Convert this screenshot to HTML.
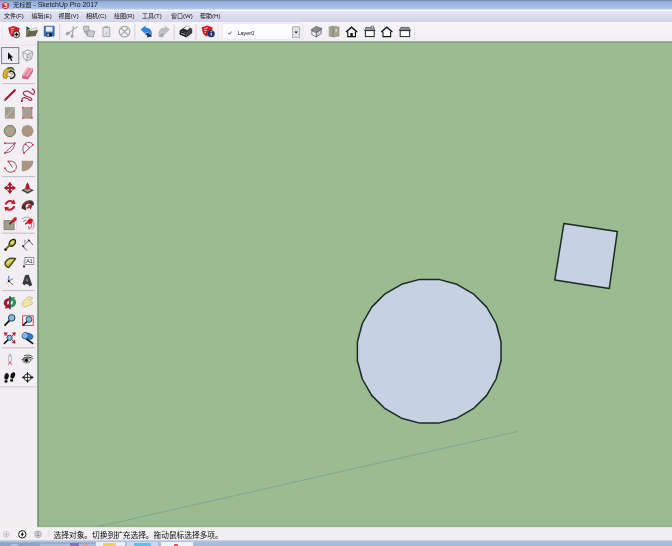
<!DOCTYPE html>
<html lang="zh-CN">
<head>
<meta charset="utf-8">
<title>无标题 - SketchUp Pro 2017</title>
<style>
html,body{margin:0;padding:0;}
body{width:672px;height:546px;overflow:hidden;position:relative;background:#9bbb91;font-family:"Liberation Sans","Noto Sans CJK SC",sans-serif;color:#111;}
.abs{position:absolute;}
svg{position:absolute;left:0;top:0;overflow:visible;}
#title .t,#menu span,#status .t,svg text{filter:grayscale(1);}
#title{left:0;top:0;width:672px;height:11px;background:linear-gradient(#6d7f97 0,#879fc4 1px,#95b1dc 2px,#a3bfe8 7px,#b2caed 9px,#eef3fb 9.9px,#fbfcfe 10.5px,#eeeff8 11px);}
#title .t{left:13px;top:0;height:10px;line-height:10.5px;font-size:6.2px;color:#10161f;white-space:nowrap;}
#title .t b{font-weight:normal;font-size:6.95px;}
#menu{left:0;top:11px;width:672px;height:11px;background:linear-gradient(#e3e4f2,#dadced 50%,#d4d6e8 90%,#cfd1e3);}
#menu span{position:absolute;top:0.4px;height:11px;line-height:10.5px;font-size:6.05px;white-space:nowrap;color:#0c0c14;}
#tool{left:0;top:22px;width:672px;height:19.2px;background:linear-gradient(#f6f4f8,#f2eff3);}
#left{left:0;top:41px;width:37.4px;height:486px;background:#f2eff3;}
#edgeL{left:37.4px;top:41.2px;width:1.8px;height:485.6px;background:linear-gradient(to right,#b9c4b9 0,#6a856c 45%,#7a977a 75%,#9bbb91 100%);}
#edgeT{left:37.3px;top:41px;width:635px;height:1.7px;background:linear-gradient(to bottom,#c4cdc3 0,#728d74 50%,#8dab87 85%,#9bbb91 100%);}
#canvas{left:38px;top:42px;width:634px;height:485px;background:linear-gradient(#9bbb91 0,#9bbb91 482.6px,#93b08c 484px,#93b08c 484.8px,#def0d6 485px);}
#status{left:0;top:527px;width:672px;height:13.5px;background:linear-gradient(#f3f3ee 0,#f2f0f2 2px,#f1eef2 100%);}
#status:before{content:"";position:absolute;left:38px;right:0;top:-0.2px;height:1px;background:#e0f0d9;}
#status .t{left:53.6px;top:0.5px;height:14px;line-height:15px;letter-spacing:0;font-size:7.7px;white-space:nowrap;color:#0a0a0a;}
#task{left:0;top:540.3px;width:672px;height:5.7px;background:linear-gradient(#dfe3ec 0,#b9c8e0 0.8px,#a9bedd 2px,#a3badc 6.2px);overflow:hidden;}
#task i{position:absolute;top:0;height:6px;display:block;}
</style>
</head>
<body>
<div id="title" class="abs">
<svg width="12" height="11" viewBox="0 0 12 11"><path d="M2.4 3.6 L5.5 2.6 L8.7 3.6 L8.5 7.6 L5.5 8.9 L2.6 7.6 Z" fill="#d8262c" stroke="#d8262c" stroke-width="0.6" stroke-linejoin="round"/><path d="M3.6 4 L6.8 3.4 L6.8 4.6 L4.8 5 L7 5.6 L6.8 7.4 L3.8 7.6" fill="none" stroke="#fff" stroke-width="0.8"/></svg>
<div class="t abs">无标题<b> - SketchUp Pro 2017</b></div></div>
<div id="menu" class="abs">
<span style="left:4px">文件(F)</span><span style="left:31.5px">编辑(E)</span><span style="left:58.5px">视图(V)</span><span style="left:86px">相机(C)</span><span style="left:114px">绘图(R)</span><span style="left:142px">工具(T)</span><span style="left:171px">窗口(W)</span><span style="left:200px">帮助(H)</span>
</div>
<div id="tool" class="abs">
<svg width="672" height="20" viewBox="0 22 672 20">
<!-- grips -->
<g stroke="#d2cfd7" stroke-width="0.8" stroke-dasharray="0.8 0.8">
<line x1="2.4" y1="24.5" x2="2.4" y2="40"/><line x1="218" y1="24.5" x2="218" y2="40"/><line x1="303" y1="24.5" x2="303" y2="40"/><line x1="414.5" y1="24.5" x2="414.5" y2="40"/>
</g>
<g stroke="#cfccd3" stroke-width="0.9">
<line x1="59.7" y1="24" x2="59.7" y2="40"/><line x1="134.8" y1="24" x2="134.8" y2="40"/><line x1="174.2" y1="24" x2="174.2" y2="40"/><line x1="196" y1="24" x2="196" y2="40"/>
</g>
<!-- new -->
<g transform="translate(0 0.5)">
<path d="M8.2 27.2 L13.4 25.4 L19.6 27.4 L18.6 32 L12 36.4 L9.6 33 Z" fill="#c8202a"/>
<path d="M10.6 28.6 L14.4 27.8 M10.8 30.6 L13.6 30.2 M11 32.6 L12.6 32.4" stroke="#f6c8cc" stroke-width="0.9" fill="none"/>
<circle cx="16.5" cy="34" r="3.2" fill="#fff" stroke="#111" stroke-width="0.8"/>
<path d="M14.4 34 H18.6 M16.5 31.9 V36.1" stroke="#111" stroke-width="1.3"/>
</g>
<!-- open -->
<path d="M26 37 L26 29.6 L29.5 29.6 L31 30.8 L36 30.2 L36 33 Z" fill="#85826a"/>
<path d="M31 29.4 L36.4 27.8 L36.8 32 L31 33 Z" fill="#efece0" stroke="#8b8872" stroke-width="0.4"/>
<path d="M26 37 L28.6 31.6 L38.2 30 L35.6 36 Z" fill="#65634b"/>
<path d="M26.2 26 L30.2 28.4 L26.6 30.6 Z" fill="#176a34"/>
<!-- save -->
<rect x="43.8" y="25.8" width="10.8" height="10.8" rx="1.2" fill="#3b6ea9"/>
<rect x="45.8" y="26.8" width="6.8" height="4.8" fill="#e9eef8"/>
<rect x="46.4" y="33" width="5.6" height="3.6" fill="#1d2b4a"/>
<rect x="47.2" y="33.6" width="1.8" height="2.4" fill="#9ab4dc"/>
<!-- cut -->
<g stroke="#a3a2a8" fill="none" stroke-width="1.1" stroke-linecap="round">
<path d="M77.2 26.6 L69.4 32.6 M73.4 26.2 L72.4 35"/>
</g>
<ellipse cx="67.8" cy="33.4" rx="2.3" ry="1.5" fill="#a3a2a8" transform="rotate(-30 67.8 33.4)"/>
<ellipse cx="72.2" cy="36" rx="1.5" ry="2" fill="#a3a2a8"/>
<!-- copy -->
<g fill="#c9c8ce" stroke="#9a999f" stroke-width="0.9">
<path d="M83.4 26.6 L88.6 26 L89.4 31 L84.2 31.6 Z"/>
<path d="M88 30.4 L94.8 31.4 L93.4 37 L87 36 Z"/>
<path d="M84.6 32 L87 31.6 L87 35 Z"/>
</g>
<!-- paste -->
<rect x="103" y="27.4" width="6.8" height="9" fill="#e4e3e8" stroke="#a09fa6" stroke-width="0.9"/>
<rect x="104.6" y="26.2" width="3.6" height="1.8" fill="#a09fa6"/>
<path d="M104.6 33.6 H107 V31.4" stroke="#b4b3b9" stroke-width="0.7" fill="none"/>
<!-- delete -->
<circle cx="124.6" cy="31.6" r="5.3" fill="none" stroke="#a3a2a8" stroke-width="1.2"/>
<path d="M121 28 L128.2 35.2 M128.2 28 L121 35.2" stroke="#a3a2a8" stroke-width="1.1"/>
<!-- undo -->
<path d="M146.4 32.6 C149 32.6 151 33.6 152 36.6 L147 37.4 C147.4 35.6 146.6 34.8 145.4 34.6 Z" fill="#26415f"/>
<path d="M140.6 29.6 L145.6 25.6 L145.6 27.8 C149.6 27.6 152.2 30 152 35.6 C151 32.8 148.8 32.2 145.6 32.4 L145.6 34.6 Z" fill="#2d86dc"/>
<!-- redo -->
<path d="M169.8 29.6 L164.8 25.6 L164.8 27.8 C160.8 27.6 158.2 30 158.4 35.6 C159.4 32.8 161.6 32.2 164.8 32.4 L164.8 34.6 Z" fill="#bcbbc1"/>
<path d="M164 32.6 C161.4 32.6 159.4 33.6 158.4 36.6 L163.4 37.4 C163 35.6 163.8 34.8 165 34.6 Z" fill="#a9a8ae"/>
<!-- print -->
<path d="M179.6 30.4 L185.6 26.4 L192.2 28.8 L186.6 33.2 Z" fill="#26262a"/>
<path d="M183.4 28.6 L186.6 26 L190.6 27.6 L187.4 30.2 Z" fill="#f4f4f6" stroke="#444" stroke-width="0.3"/>
<path d="M179.6 30.4 L186.6 33.2 L186.6 37.4 L179.6 34.6 Z" fill="#141416"/>
<path d="M186.6 33.2 L192.2 28.8 L192.2 33 L186.6 37.4 Z" fill="#3a3a40"/>
<path d="M181 33 L185.4 34.8" stroke="#d8d8dc" stroke-width="0.8"/>
<!-- model info -->
<path d="M201.6 27.2 L207.4 25.4 L212.6 27.4 L211.6 34 L206 36.6 L203 33.4 Z" fill="#c8202a"/>
<path d="M204 28.6 L208 27.8 M204.2 30.6 L207 30.2 M204.4 32.6 L206 32.4" stroke="#f6c8cc" stroke-width="0.9" fill="none"/>
<circle cx="211.2" cy="33.8" r="3.5" fill="#18336f"/>
<path d="M211.2 33 V35.6" stroke="#fff" stroke-width="1"/><circle cx="211.2" cy="31.7" r="0.6" fill="#fff"/>
<!-- layer dropdown -->
<rect x="222.6" y="23.8" width="78.2" height="15.4" fill="#fdfcfe" stroke="#e1dee6" stroke-width="0.6"/>
<path d="M228.4 33 L229.4 34.2 L231.4 31.6" fill="none" stroke="#333" stroke-width="0.8"/>
<text x="237.4" y="35.2" font-family="Liberation Sans, sans-serif" font-size="5.5" fill="#111">Layer0</text>
<rect x="292.4" y="26.8" width="7.4" height="11" fill="#e3e1e6" stroke="#8b8a92" stroke-width="0.6"/>
<path d="M294.4 31.4 H297.8 L296.1 33.6 Z" fill="#111"/>
<!-- views -->
<!-- iso -->
<path d="M310.8 30 L316 26.4 L322.2 28.6 L318 32 Z" fill="#8c8c90" stroke="#3c3c40" stroke-width="0.5"/>
<path d="M311.8 31 L311.8 34.6 L316.4 37 L316.4 32.6 Z" fill="#f2f2f4" stroke="#3c3c40" stroke-width="0.6"/>
<path d="M316.4 32.6 L321.2 29.6 L321.2 33.6 L316.4 37 Z" fill="#d0d0d4" stroke="#3c3c40" stroke-width="0.6"/>
<!-- top -->
<path d="M329.2 27 L333 26.2 L339 27 L339 36 L333 37 L329.2 36 Z" fill="#a4a594" stroke="#77786a" stroke-width="0.5"/>
<path d="M333 26.2 V37" stroke="#6c6d60" stroke-width="0.6"/>
<rect x="335.4" y="29" width="2" height="2.4" fill="#d4d5c8"/>
<!-- front -->
<path d="M346 32 L351.6 27.2 L357.2 32" fill="none" stroke="#111" stroke-width="1.5" stroke-linejoin="miter"/>
<path d="M347.8 31.4 V36.6 H355.4 V31.4" fill="#fff" stroke="#111" stroke-width="1.2"/>
<rect x="350.4" y="33" width="2.4" height="3.6" fill="#111"/>
<!-- right -->
<path d="M364.4 30.6 L366 27.4 H373.6 L375.2 30.6 Z" fill="#9a9a9e" stroke="#333" stroke-width="0.6"/>
<rect x="365.4" y="30.6" width="8.8" height="6" fill="#fff" stroke="#222" stroke-width="1"/>
<circle cx="372.4" cy="27" r="1.3" fill="#d8d8dc" stroke="#444" stroke-width="0.5"/>
<!-- back -->
<path d="M381.2 32 L386.8 27.2 L392.4 32" fill="none" stroke="#111" stroke-width="1.3"/>
<path d="M383 31.4 V36.6 H390.6 V31.4" fill="#fff" stroke="#111" stroke-width="1.1"/>
<path d="M385.6 27.4 L384.6 26.4" stroke="#555" stroke-width="0.8"/>
<!-- left -->
<path d="M399.2 30.6 L400.8 27.4 H409 L410.6 30.6 Z" fill="#8c8c90" stroke="#333" stroke-width="0.6"/>
<rect x="400.2" y="30.6" width="9.4" height="6" fill="#fff" stroke="#222" stroke-width="1"/>
</svg>

</div>
<div id="canvas" class="abs">
<svg width="634" height="485" viewBox="38 42 634 485">
<line x1="98.4" y1="526.6" x2="518" y2="431.4" stroke="#5b7b8e" stroke-opacity="0.8" stroke-width="0.8" stroke-dasharray="0.9 0.7"/>
<polygon points="501.0,360.7 496.1,379.0 486.7,395.4 473.3,408.7 456.9,418.2 438.7,423.1 419.7,423.1 401.5,418.2 385.1,408.7 371.7,395.4 362.3,379.0 357.4,360.7 357.4,341.8 362.3,323.5 371.7,307.1 385.1,293.8 401.5,284.3 419.7,279.4 438.7,279.4 456.9,284.3 473.3,293.8 486.7,307.1 496.1,323.5 501.0,341.8" fill="#c6d2e2" stroke="#1a2a24" stroke-width="1.5" stroke-linejoin="round"/>
<polygon points="563.9,223.5 617.3,231.6 609.3,288.5 554.8,280" fill="#c6d2e2" stroke="#1a2a24" stroke-width="1.5" stroke-linejoin="round"/>
</svg>
</div>
<div id="edgeT" class="abs"></div><div id="edgeL" class="abs"></div>
<div id="left" class="abs">
<svg width="38" height="486" viewBox="0 41 38 486">
<line x1="0" y1="44.8" x2="37" y2="44.8" stroke="#e2dfe6" stroke-width="0.7"/>
<g stroke="#b3b0b8" stroke-width="0.8">
<line x1="2" y1="83.6" x2="35" y2="83.6"/><line x1="2" y1="176.6" x2="35" y2="176.6"/><line x1="2" y1="233.2" x2="35" y2="233.2"/><line x1="2" y1="290.6" x2="35" y2="290.6"/><line x1="2" y1="347.8" x2="35" y2="347.8"/>
</g>
<line x1="0" y1="386.8" x2="37" y2="386.8" stroke="#c4c1c9" stroke-width="0.8"/>
<!-- select -->
<rect x="1.6" y="47.6" width="17.2" height="16" fill="#eceaf0" stroke="#74737b" stroke-width="0.9"/>
<path d="M8 52.2 L8 59.6 L9.8 58 L11.2 61 L12.4 60.4 L11 57.6 L13.2 57.4 Z" fill="#0c0c10"/>
<!-- component -->
<g fill="none" stroke="#adacb3" stroke-width="1.1">
<path d="M22.6 52.4 L27.4 49.8 L32.8 52 L31.6 58.6 L26.6 61 L23.4 57.6 Z"/>
<path d="M22.6 52.4 L27.8 54.4 L32.8 52 M27.8 54.4 L26.6 61"/>
<circle cx="28.6" cy="56" r="1.8"/>
</g>
<!-- paint bucket -->
<path d="M3 75.6 C3 71 6 68 9 67.4 L11.6 69.6 L6.4 78.6 L3.6 78 Z" fill="#d9b21c" stroke="#5a4a10" stroke-width="0.5"/>
<path d="M7.4 69 C9.6 66.6 13.4 67.6 14.2 70.4" fill="none" stroke="#2c5c3c" stroke-width="1.3"/>
<path d="M9.4 71.6 C12 70 14.6 72 14.8 75 C14.6 77.6 12 79 10 78.2" fill="none" stroke="#1c2420" stroke-width="1.5"/>
<path d="M8.2 72 L12.8 73.8 L10.4 77.4 L6.8 75.6 Z" fill="#e8e4d4" stroke="#444" stroke-width="0.4"/>
<!-- eraser -->
<path d="M22 75.4 L27.6 67.6 L33 68.6 L33 71.8 L28 79.4 L22 78.4 Z" fill="#d4688a"/>
<path d="M22 75.4 L27.6 67.6 L33 68.6 L27.8 76.6 Z" fill="#f3aabc"/>
<path d="M24 75.8 L29.6 68 L31.2 68.3 L25.8 76.2 Z" fill="#e47f9c"/>
<!-- pencil -->
<path d="M5.2 99.8 L14.8 90.2" stroke="#9c1c36" stroke-width="2.2" stroke-linecap="round"/>
<path d="M4.2 100.8 L5.8 99.2" stroke="#77706a" stroke-width="1.6"/>
<!-- freehand -->
<path d="M32.3 88.8 C32.6 89.2 34.1 90.0 34.3 90.9 C34.5 91.9 34.0 94.1 33.5 94.5 C33.0 94.9 31.9 93.8 31.0 93.3 C30.1 92.8 29.3 91.6 28.2 91.3 C27.1 91.0 25.0 91.3 24.2 91.7 C23.4 92.1 23.1 93.0 23.4 93.7 C23.7 94.4 24.8 95.5 25.8 96.1 C26.8 96.7 28.4 96.8 29.4 97.3 C30.4 97.8 31.8 98.8 31.9 99.3 C32.0 99.8 30.9 100.6 30.2 100.5 C29.4 100.4 28.4 99.0 27.4 98.5 C26.4 98.0 25.1 97.6 24.2 97.7 C23.3 97.8 22.6 98.3 22.2 98.9 C21.8 99.5 21.9 100.9 21.8 101.3" fill="none" stroke="#9e2f58" stroke-width="1.2" stroke-linecap="round"/>
<circle cx="21.9" cy="101" r="0.9" fill="#7c2040"/>
<!-- rectangle -->
<rect x="5.2" y="107.6" width="9.2" height="10.6" fill="#a59f8e" stroke="#8c8676" stroke-width="0.5"/>
<path d="M5.6 117.8 L14 108" stroke="#cfc8b8" stroke-width="0.9"/>
<!-- rotated rect -->
<rect x="22.8" y="107.6" width="9.2" height="10.6" fill="#a89f90" stroke="#a06a70" stroke-width="0.5"/>
<g fill="#c02040"><circle cx="22.8" cy="107.8" r="0.8"/><circle cx="32" cy="107.8" r="0.8"/><circle cx="22.8" cy="118" r="0.8"/><circle cx="32" cy="118" r="0.8"/></g>
<path d="M23.2 109.4 L30.6 117.8" stroke="#b88c88" stroke-width="0.7"/>
<!-- circle -->
<circle cx="9.9" cy="131" r="5.7" fill="#a89e8a" stroke="#6f7062" stroke-width="0.9"/>
<circle cx="9.9" cy="131" r="2.6" fill="none" stroke="#b8aa90" stroke-width="0.8"/>
<!-- polygon -->
<path d="M27.5 125.2 L31.6 126.8 L33.2 131 L31.6 135.2 L27.5 136.8 L23.4 135.2 L21.8 131 L23.4 126.8 Z" fill="#ac967f" stroke="#97806e" stroke-width="0.6"/>
<!-- arc -->
<g fill="none" stroke="#8c2c4c" stroke-width="0.8">
<path d="M4.9 143.2 H14.8 M4.9 153 L14.8 143.2"/><path d="M14.8 143.2 C14.4 149 10.6 152.6 4.9 153"/>
</g>
<g fill="#d02848"><circle cx="4.9" cy="143.2" r="0.9"/><circle cx="14.8" cy="143.2" r="0.9"/><circle cx="4.9" cy="153" r="0.9"/></g>
<!-- 2pt arc -->
<g fill="none" stroke="#7c2c48" stroke-width="0.8">
<path d="M24 153 L33 144.8 M24 153 C21.4 148.6 23.6 143.2 27.6 142.4 C30 142 32.2 143 33 144.8 M25.4 144.2 L29.8 147.8"/>
</g>
<g fill="#d02848"><circle cx="24" cy="153" r="0.9"/><circle cx="33" cy="144.8" r="0.9"/><circle cx="25.4" cy="144.2" r="0.8"/></g>
<!-- 3pt arc -->
<path d="M8.4 161.4 C12.6 160 16.4 163 16.4 166.8 C16.4 171 11.6 173.6 7.6 171.4 C6.4 170.6 5.4 169.6 5 168.2 M8.4 161.4 L12.6 167.6" fill="none" stroke="#7c2c48" stroke-width="0.8"/>
<g fill="#d02848"><circle cx="8.4" cy="161.4" r="0.9"/><circle cx="5" cy="168.2" r="0.9"/><circle cx="14.4" cy="171" r="0.8"/></g>
<!-- pie -->
<path d="M22.2 161.2 L33 161.2 C32.6 166.6 28.4 170.6 22.2 171 Z" fill="#aa9580" stroke="#7a6a60" stroke-width="0.5"/>
<!-- move -->
<g fill="#a51428" transform="translate(0 0.4)">
<path d="M9.9 181.4 L12.6 185 H7.2 Z"/><path d="M9.9 193.6 L12.6 190 H7.2 Z"/><path d="M3.8 187.5 L7.4 184.8 V190.2 Z"/><path d="M16 187.5 L12.4 184.8 V190.2 Z"/>
<rect x="9" y="184" width="1.8" height="7"/><rect x="6.4" y="186.6" width="7" height="1.8"/>
</g>
<!-- push/pull -->
<path d="M21.2 190.3 L27.6 187.2 L34 190.3 L27.6 193.7 Z" fill="#3c4a3e"/>
<path d="M23.6 189.9 L27.6 188 L31.6 189.9 L27.6 192 Z" fill="#9aa08a"/>
<path d="M27.4 182.2 C29 184.6 29.8 186.6 29.6 188.4 C29.4 189.8 25.6 189.8 25.4 188.4 C25.2 186.6 26 184.6 27.4 182.2 Z" fill="#b41830"/>
<!-- rotate --><g transform="translate(0 -0.3)">
<path d="M4.6 204.8 C5.4 201 9.6 199.2 13 201 L14 199.6 L15.6 204.2 L10.8 204 L11.8 202.8 C9.8 201.8 7.4 202.8 6.8 205 Z" fill="#c01c30"/>
<path d="M15.2 206.6 C14.4 210.4 10.2 212.2 6.8 210.4 L5.8 211.8 L4.2 207.2 L9 207.4 L8 208.6 C10 209.6 12.4 208.6 13 206.4 Z" fill="#c01c30"/>
</g><!-- follow me -->
<path d="M21.6 208.6 C21.4 203.4 26 199.4 31.4 200.4 C33.6 201 34.4 203.4 33.6 205.4 L30 204.4 C29 202.8 26.2 203.6 25.6 206 L26.2 210.6 Z" fill="#30332e"/>
<path d="M23.4 206 C24 202.6 27.4 200.8 30.6 201.6" fill="none" stroke="#c02838" stroke-width="1.2"/>
<path d="M27.4 204.6 L32.6 205.2 L30.6 209.8 L29.6 207.8 L27 209 L26.4 207.4 L28.8 206.2 Z" fill="#c01c30"/>
<!-- scale -->
<rect x="4" y="218.2" width="12.2" height="11.6" fill="#fdfdfd" stroke="#c9c8cc" stroke-width="0.4"/>
<rect x="4" y="220.4" width="10.2" height="9.4" fill="#a09c8a" stroke="#6f6d60" stroke-width="0.6"/>
<path d="M9.4 224.2 L13 220.6" stroke="#8c1020" stroke-width="1.6"/>
<path d="M12 220 L14.4 217.2 L16.8 217.4 L16.4 220.2 L13.6 222.2 Z" fill="#dc1424"/>
<!-- offset -->
<g fill="none" stroke-width="0.9">
<path d="M22 218.8 C27 215.4 33.4 217.8 34 223.6 C34.2 226.6 33.2 228.6 32 229.6" stroke="#d8708a"/>
<path d="M31.4 223 C32 225.6 31 228 29.2 229.6" stroke="#c05068"/>
<path d="M23.4 221.8 C24.4 220.4 25.6 220 26.6 220.2" stroke="#5a5a5e"/>
<path d="M28.4 226 C29.2 227 29.2 228 28.8 229" stroke="#5a5a5e"/>
</g>
<path d="M25.4 224.2 L27.6 222.4" stroke="#8c1020" stroke-width="1.4"/>
<path d="M26.6 222 L29 218.8 L32.8 219 L32.4 222.6 L29.4 224.6 Z" fill="#d41424"/>
<!-- tape -->
<path d="M9 244.6 C8.6 241.6 11.6 238.8 14.4 239.4 C16.4 240.2 15.8 243.6 13.4 245.6 C11.8 246.8 10.2 246.6 9 244.6 Z" fill="#b5b230" stroke="#22220c" stroke-width="1.2"/>
<path d="M9.4 245.4 L6.4 248.6" stroke="#8f8c20" stroke-width="2.2"/>
<path d="M9.4 245.4 L6.4 248.6" stroke="#22220c" stroke-width="0.5"/>
<circle cx="5.6" cy="249.6" r="1.4" fill="#111"/>
<ellipse cx="12.4" cy="242.4" rx="1.6" ry="1" transform="rotate(-40 12.4 242.4)" fill="#e8e69a"/>
<!-- dimension -->
<g stroke="#1c1c1e" fill="none">
<path d="M23.1 246.3 L29 240.4" stroke-width="0.7"/>
<path d="M22.4 245.4 L26.8 250.6 M28.4 239.6 L33 245" stroke-width="0.7"/>
<path d="M22.4 245.6 L23.8 247 M28.3 239.7 L29.7 241.1" stroke-width="1.4"/>
<path d="M24.4 240.2 C25.4 239.8 25.4 241 24.8 241.2 C25.6 241.4 25.4 242.6 24.4 242.4" stroke-width="0.5"/>
</g>
<!-- protractor -->
<path d="M5.2 264.4 C4.6 260 10 257 15.6 258.6 L8.6 267.6 C6.8 267.2 5.6 266 5.2 264.4 Z" fill="#c4c448" stroke="#3a3a14" stroke-width="1.4" stroke-linejoin="round"/>
<path d="M7.6 263.6 C8 261.6 10 260.4 12 260.8" fill="none" stroke="#ecea9c" stroke-width="1.1"/>
<!-- text -->
<rect x="25" y="257.4" width="8.8" height="7" fill="#fbfbfd" stroke="#77767c" stroke-width="0.8"/>
<text x="26.2" y="263.2" font-family="Liberation Sans, sans-serif" font-size="5.4" fill="#222">A1</text>
<path d="M24 266 V259.6" stroke="#555" stroke-width="0.6" stroke-dasharray="0.8 0.8"/>
<circle cx="24" cy="266.6" r="1" fill="#111"/>
<!-- axes -->
<g transform="translate(-0.8 0.2)">
<path d="M9.6 281 V275.6" stroke="#2858c8" stroke-width="0.9"/>
<path d="M9.6 281 L13.6 278.4" stroke="#2a8c5a" stroke-width="0.9"/>
<path d="M9.6 281 L13.6 284.6" stroke="#c02838" stroke-width="0.9"/>
<path d="M9.6 281 L6.6 283.6 M9.6 281 L7.6 278.6" stroke="#d08c98" stroke-width="0.6"/>
<circle cx="9.6" cy="281" r="1" fill="#111"/>
</g>
<!-- 3d text -->
<path d="M22.4 283.4 L25.2 275.2 L28.6 274.4 L32.2 285 L29.6 286.6 L28 284.4 L25.6 284 L24.6 285.6 Z" fill="#3a3a3e"/>
<path d="M26 281 L27 277.6 L28 281.2 Z" fill="#9c9ca0"/>
<!-- orbit -->
<path d="M9 298 C3.6 298.4 2.2 304 5.8 306.8 L4.6 308.4 L9.8 308 L9 303.4 L7.8 304.8 C6.4 303 7.2 300.8 9.4 300.4 Z" fill="#a81830"/>
<path d="M11 307.4 C16.4 307 17.8 301.4 14.2 298.6 L15.4 297 L10.2 297.4 L11 302 L12.2 300.6 C13.6 302.4 12.8 304.6 10.6 305 Z" fill="#2f9458"/>
<path d="M10 296.2 V309.2" stroke="#111" stroke-width="1.3"/>
<!-- pan -->
<path d="M22 304.4 C23 301.4 25 299.4 27 297.6 C28.6 296.6 30.6 296.8 32.6 297.8 C32.8 299 31 299.6 29.6 299.4 C31.4 300.8 32.6 302.6 32.4 304 C30 305.6 27 306.2 24.4 307.2 Z" fill="#f2e3a6" stroke="#b8a870" stroke-width="0.6"/>
<!-- zoom -->
<path d="M9.4 320.6 L5 325.2" stroke="#111" stroke-width="1.7" stroke-linecap="round"/>
<circle cx="11.7" cy="317.9" r="3.3" fill="#8cb6e2" stroke="#1c3456" stroke-width="0.9"/>
<!-- zoom window -->
<rect x="22.6" y="315.8" width="10.6" height="9.6" fill="#fbf6f8" stroke="#c83848" stroke-width="0.9"/>
<path d="M27 321.6 L23.2 325" stroke="#111" stroke-width="1.6" stroke-linecap="round"/>
<circle cx="29" cy="319.4" r="2.9" fill="#8cb6e2" stroke="#1c3456" stroke-width="0.8"/>
<!-- zoom extents -->
<g fill="#c01c30">
<path d="M4 332.2 L8 332.8 L4.8 336.2 Z"/><path d="M15.8 332.2 L11.8 332.8 L15 336.2 Z"/><path d="M15.6 343.6 L11.6 343 L14.8 339.6 Z"/>
</g>
<path d="M5 333.4 L8 336.4 M14.8 333.4 L11.8 336.4 M14.6 342.4 L11.6 339.6" stroke="#c01c30" stroke-width="1"/>
<path d="M7.8 340 L4.4 343.4" stroke="#111" stroke-width="1.6" stroke-linecap="round"/>
<circle cx="9.6" cy="337.8" r="2.6" fill="#8cb6e2" stroke="#1c3456" stroke-width="0.8"/>
<!-- previous -->
<path d="M26.6 339 L32.6 343.4" stroke="#111" stroke-width="1.7" stroke-linecap="round"/>
<path d="M22 336 C22 333.6 24 332.4 26 332.6 L31 334 C33 334.6 33.6 337 32.4 338.4 C31.4 339.6 29.6 339.6 28.4 339 L24 338.8 C22.8 338.4 22 337.4 22 336 Z" fill="#2c7cc8" stroke="#163c6c" stroke-width="0.6"/>
<circle cx="25" cy="335.6" r="2" fill="#78b0e4" stroke="#e8f0fa" stroke-width="0.5"/>
<!-- position camera -->
<g fill="none" stroke="#9a9aa0" stroke-width="0.7">
<ellipse cx="10" cy="358.6" rx="1.6" ry="3.6"/><circle cx="10" cy="355" r="0.9"/>
</g>
<path d="M8 365.4 L10 361.6 L12 365.4 M8.6 362.4 L11.4 363.6 M11.4 362.4 L8.6 363.6" stroke="#d46a78" stroke-width="0.7" fill="none"/>
<!-- look around -->
<path d="M22 360 C24 356.6 29.6 356 32.8 358.8" fill="none" stroke="#111" stroke-width="0.9"/>
<path d="M22.6 360.4 C24.6 358.2 29 358 31.4 359.8 C29.4 362.6 25 362.8 22.6 360.4 Z" fill="#fff" stroke="#111" stroke-width="0.7"/>
<circle cx="26.4" cy="360.2" r="1.8" fill="#111"/>
<path d="M24 355.8 C26.4 354.6 30.2 354.8 32.6 356.6" fill="none" stroke="#333" stroke-width="0.8"/>
<path d="M23 362.2 C25 363.6 28.6 363.4 30.4 362" fill="none" stroke="#777" stroke-width="0.6"/>
<!-- walk -->
<g fill="#111">
<ellipse cx="6.6" cy="376.4" rx="2.2" ry="3.3" transform="rotate(10 6.6 376.4)"/><ellipse cx="6" cy="381.4" rx="1.6" ry="1.3"/>
<ellipse cx="12.8" cy="375.4" rx="2.2" ry="3.3" transform="rotate(18 12.8 375.4)"/><ellipse cx="11.6" cy="380.4" rx="1.6" ry="1.3"/>
</g>
<!-- section -->
<g fill="none" stroke="#111" stroke-width="0.8">
<circle cx="27.5" cy="377.4" r="3.4"/><path d="M22.6 377.4 H33 M27.5 372.6 V382.2"/>
</g>
<path d="M33.6 377.4 L31.4 375.6 V379.2 Z" fill="#111"/><path d="M21.8 377.4 L24 376 V378.8 Z" fill="#111"/>
<path d="M27.5 372 L26.2 373.8 H28.8 Z M27.5 382.8 L26.2 381 H28.8 Z" fill="#111"/>
</svg>

</div>
<div id="status" class="abs">
<svg width="60" height="14" viewBox="0 527 60 14">
<circle cx="6.3" cy="534.3" r="2.8" fill="#ecebef" stroke="#c6c5cb" stroke-width="1"/>
<ellipse cx="6.3" cy="534.3" rx="0.8" ry="1.4" fill="#a9a8ae"/>
<circle cx="22.3" cy="534.3" r="3.7" fill="#fff" stroke="#17171a" stroke-width="1"/>
<path d="M22.3 531.8 L23.5 534.3 L22.3 536.8 L21.1 534.3 Z" fill="#17171a"/>
<circle cx="38" cy="534.3" r="3.3" fill="#d6d5da" stroke="#a9a8ae" stroke-width="0.9"/>
<circle cx="38" cy="533.2" r="0.9" fill="#8f8e94"/><path d="M36.2 536 C36.4 534.4 39.6 534.4 39.8 536 Z" fill="#8f8e94"/>
<path d="M48.7 530.5 V538.5" stroke="#d0ced5" stroke-width="0.7" stroke-dasharray="0.8 0.8"/>
</svg>

<div class="t abs">选择对象。切换到扩充选择。拖动鼠标选择多项。</div></div>
<div id="task" class="abs">
<i style="left:0;top:1.6px;width:40px;background:linear-gradient(#9cb2d3,#8ba3c9 1.2px)"></i>
<i style="left:9.5px;top:3.8px;width:9.5px;height:3px;background:#a9c8ea;border-radius:5px 5px 0 0"></i>
<i style="left:40px;top:1.6px;width:54.5px;background:linear-gradient(#9db3d4,#93abd0 1.5px,#a9c0e2 2.8px)"></i>
<i style="left:69.5px;top:3px;width:9.5px;background:#8573bd"></i>
<i style="left:82.5px;top:3.5px;width:5px;background:#d9a0a8"></i>
<i style="left:95.5px;top:2px;width:29px;background:#e9eef7"></i>
<i style="left:103px;top:3px;width:13px;background:#efcf5a"></i>
<i style="left:126.7px;top:2px;width:31px;background:#c6dbf3"></i>
<i style="left:134px;top:3px;width:16.5px;background:#69bbea"></i>
<i style="left:161px;top:2px;width:31.5px;background:#f0f3f9"></i>
<i style="left:174px;top:3.5px;width:4px;background:#d85a68"></i>
</div>
</body>
</html>
